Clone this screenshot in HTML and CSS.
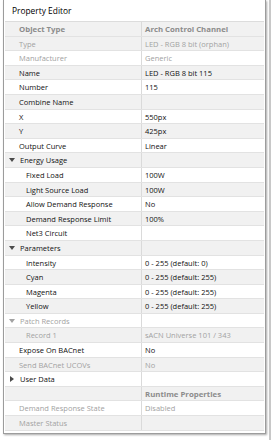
FILE: index.html
```html
<!DOCTYPE html>
<html lang="en">
<head>
  <meta charset="UTF-8"/>
  <title>Property Editor</title>
  <link rel="stylesheet" href="styles.css">
</head>
<body>

  <!-- PANEL -->
  <div class="panel">
    <div class="panel-title">Property Editor</div>

    <div class="grid">
      <div class="row head"><div class="cell key">Object Type</div><div class="cell val">Arch Control Channel</div></div>
      <div class="row off"><div class="cell key">Type</div><div class="cell val">LED - RGB 8 bit (orphan)</div></div>
      <div class="row off"><div class="cell key">Manufacturer</div><div class="cell val">Generic</div></div>
      <div class="row"><div class="cell key">Name</div><div class="cell val">LED - RGB 8 bit 115</div></div>
      <div class="row"><div class="cell key">Number</div><div class="cell val">115</div></div>
      <div class="row"><div class="cell key">Combine Name</div><div class="cell val"></div></div>
      <div class="row"><div class="cell key">X</div><div class="cell val">550px</div></div>
      <div class="row"><div class="cell key">Y</div><div class="cell val">425px</div></div>
      <div class="row"><div class="cell key">Output Curve</div><div class="cell val">Linear</div></div>

      <div class="row"><div class="cell key group"><span class="arrow down"></span>Energy Usage</div><div class="cell val"></div></div>
      <div class="row"><div class="cell key child">Fixed Load</div><div class="cell val">100W</div></div>
      <div class="row"><div class="cell key child">Light Source Load</div><div class="cell val">100W</div></div>
      <div class="row"><div class="cell key child">Allow Demand Response</div><div class="cell val">No</div></div>
      <div class="row"><div class="cell key child">Demand Response Limit</div><div class="cell val">100%</div></div>
      <div class="row"><div class="cell key child">Net3 Circuit</div><div class="cell val"></div></div>

      <div class="row"><div class="cell key group"><span class="arrow down"></span>Parameters</div><div class="cell val"></div></div>
      <div class="row"><div class="cell key child">Intensity</div><div class="cell val">0 - 255 (default: 0)</div></div>
      <div class="row"><div class="cell key child">Cyan</div><div class="cell val">0 - 255 (default: 255)</div></div>
      <div class="row"><div class="cell key child">Magenta</div><div class="cell val">0 - 255 (default: 255)</div></div>
      <div class="row"><div class="cell key child">Yellow</div><div class="cell val">0 - 255 (default: 255)</div></div>

      <div class="row off"><div class="cell key group"><span class="arrow down"></span>Patch Records</div><div class="cell val"></div></div>
      <div class="row off"><div class="cell key child">Record 1</div><div class="cell val">sACN Universe 101 / 343</div></div>
      <div class="row"><div class="cell key">Expose On BACnet</div><div class="cell val">No</div></div>
      <div class="row off"><div class="cell key">Send BACnet UCOVs</div><div class="cell val">No</div></div>
      <div class="row"><div class="cell key group"><span class="arrow right"></span>User Data</div><div class="cell val"></div></div>

      <div class="row head"><div class="cell key"></div><div class="cell val">Runtime Properties</div></div>
      <div class="row off"><div class="cell key">Demand Response State</div><div class="cell val">Disabled</div></div>
      <div class="row off"><div class="cell key">Master Status</div><div class="cell val"></div></div>
    </div>
  </div>

</body>
</html>
```

FILE: styles.css
```css
/* GLOBAL */
* {
  margin: 0;
  padding: 0;
  box-sizing: border-box;
}
body {
  width: 271px;
  height: 440px;
  background: #fff;
  font-family: "Open Sans", "Noto Sans", sans-serif;
  font-size: 7.5px;
  color: #111;
  border-right: 2px solid #c8c8c8;
  padding: 0 3px 0 3px;
}
/* PANEL FRAME */
.panel {
  width: 263px;
  height: 434px;
  background: #fff;
  border: 1px solid #9c9c9c;
  border-top: none;
  box-shadow: 1px 1px 2px rgba(0,0,0,0.35);
  padding: 0 1px 2px 1px;
}
.panel-title {
  height: 21px;
  line-height: 22px;
  padding-left: 7px;
  font-size: 8.4px;
  color: #000;
}
/* PROPERTY GRID */
.grid {
  border-top: 1px solid #dcdcdc;
}
.row {
  display: grid;
  grid-template-columns: 137px 1fr;
  height: 14.6px;
  line-height: 14px;
  border-bottom: 1px solid #e2e2e2;
  background: #fff;
}
.row:nth-child(even),
.row.head {
  background: #f1f1f1;
}
.cell {
  white-space: nowrap;
  overflow: hidden;
}
.key {
  padding-left: 14px;
  border-right: 1px solid #dadada;
}
.val {
  padding-left: 3px;
}
.key.child {
  padding-left: 21px;
}
.key.group {
  padding-left: 3px;
  display: flex;
  align-items: center;
}
.off .cell {
  color: #a2a2a2;
}
.head .cell {
  font-weight: bold;
  color: #8c8c8c;
  font-size: 7.8px;
}
/* TREE ARROWS */
.arrow {
  display: inline-block;
  width: 0;
  height: 0;
  margin-right: 5px;
}
.arrow.down {
  border-left: 3px solid transparent;
  border-right: 3px solid transparent;
  border-top: 4px solid #4a4a4a;
  margin-left: 1px;
}
.arrow.right {
  border-top: 3px solid transparent;
  border-bottom: 3px solid transparent;
  border-left: 4px solid #4a4a4a;
  margin-left: 2px;
  margin-right: 6px;
}
.off .arrow.down {
  border-top-color: #a2a2a2;
}
```
